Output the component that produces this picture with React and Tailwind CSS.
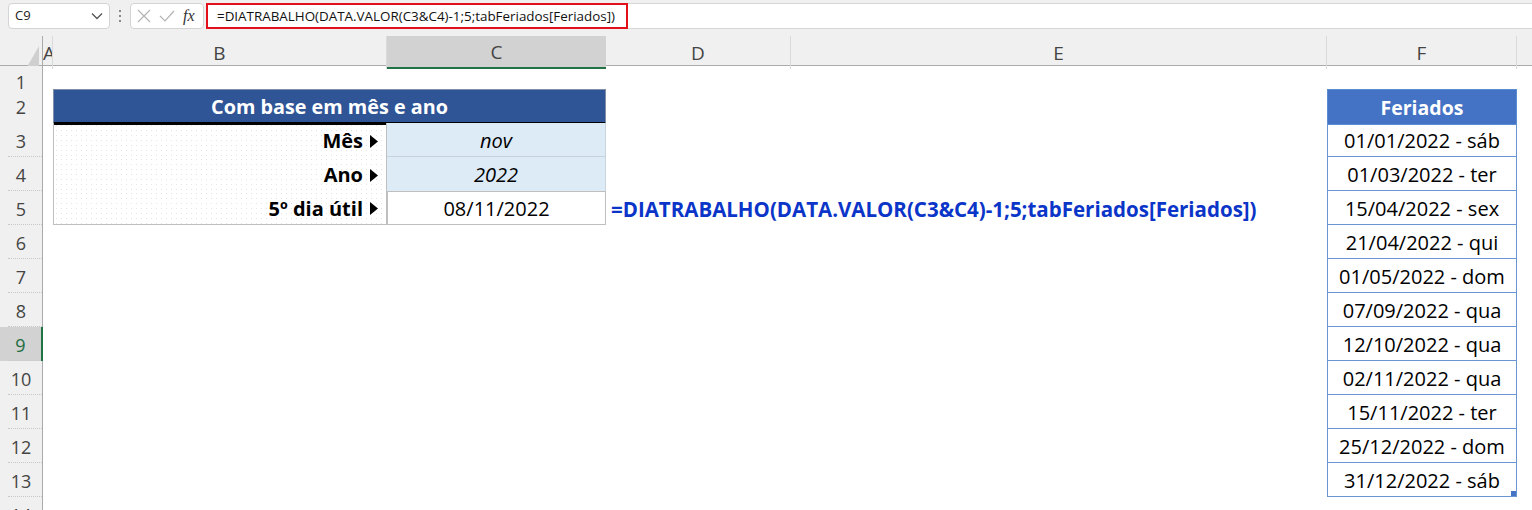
import React from 'react';

const font = { fontFamily: '"Open Sans", "Noto Sans", sans-serif' };

const Tri = () => (
  <svg width="8" height="13" viewBox="0 0 8 13" className="ml-[7px] shrink-0">
    <polygon points="0,0 8,6.5 0,13" fill="#000" />
  </svg>
);

const feriados = [
  '01/01/2022 - sáb',
  '01/03/2022 - ter',
  '15/04/2022 - sex',
  '21/04/2022 - qui',
  '01/05/2022 - dom',
  '07/09/2022 - qua',
  '12/10/2022 - qua',
  '02/11/2022 - qua',
  '15/11/2022 - ter',
  '25/12/2022 - dom',
  '31/12/2022 - sáb',
];

const cols = 'grid grid-cols-[43px_10px_334px_219px_185px_536px_190px_1fr]';

const FormulaBar = () => (
  <div className="h-[36px] bg-[#f0f0f0] flex items-start pt-[3px]">
    <div className="ml-[8px] w-[102px] h-[26px] bg-white border border-[#d4d4d4] rounded-[4px] flex items-center justify-between px-[6px] text-[13px] text-[#222]">
      <span>C9</span>
      <svg width="12" height="8" viewBox="0 0 12 8"><path d="M1 1.5 L6 6.5 L11 1.5" fill="none" stroke="#555" strokeWidth="1.3" /></svg>
    </div>
    <div className="w-[20px] h-[26px] flex flex-col items-center justify-center gap-[3px]">
      <span className="w-[2px] h-[2px] bg-[#888]" />
      <span className="w-[2px] h-[2px] bg-[#888]" />
      <span className="w-[2px] h-[2px] bg-[#888]" />
    </div>
    <div className="w-[74px] h-[26px] bg-white border border-[#d4d4d4] rounded-[4px] flex items-center px-[6px] gap-[8px]">
      <svg width="14" height="14" viewBox="0 0 14 14"><path d="M1 1 L13 13 M13 1 L1 13" stroke="#b4b4b4" strokeWidth="1.2" /></svg>
      <svg width="16" height="14" viewBox="0 0 16 14"><path d="M1 7 L6 12 L15 2" fill="none" stroke="#b4b4b4" strokeWidth="1.2" /></svg>
      <span className="text-[16px] italic text-[#333] leading-none" style={{ fontFamily: '"Liberation Serif", serif' }}>fx</span>
    </div>
    <div className="flex-1 h-[26px] ml-[2px] bg-white border-y border-[#d6d6d6] flex items-center">
      <div className="h-[26px] w-[422px] border-2 border-[#e3101c] flex items-center pl-[9px] text-[13.4px] text-[#111] whitespace-nowrap">
        =DIATRABALHO(DATA.VALOR(C3&amp;C4)-1;5;tabFeriados[Feriados])
      </div>
    </div>
  </div>
);

const ColHeaders = () => {
  const h = 'flex items-center justify-center text-[19px] text-[#444] pt-[2px]';
  const sep = 'border-r border-[#dadada]';
  return (
    <div className={`${cols} h-[30px] bg-[#f0f0f0] border-b border-[#ababab]`}>
      <div className="border-r border-[#ababab] flex items-end justify-end pr-[3px] pb-[2px]">
        <svg width="12" height="21" viewBox="0 0 12 21"><polygon points="12,0 12,21 0,21" fill="#cfcfcf" /></svg>
      </div>
      <div className={`overflow-hidden flex items-center pt-[2px] text-[19px] text-[#444] ${sep}`}>A</div>
      <div className={`${h} ${sep}`}>B</div>
      <div className={`${h} bg-[#d2d2d2] text-[#1e6b41] border-b-2 border-[#217346]`}>C</div>
      <div className={`${h} ${sep}`}>D</div>
      <div className={`${h} ${sep}`}>E</div>
      <div className={`${h} ${sep}`}>F</div>
      <div />
    </div>
  );
};

const RowHead = ({ n, active }) => (
  <div
    className={`flex flex-col ${
      active ? 'bg-[#d2d2d2] text-[#1e6b41] border-r-2 border-[#217346]' : 'bg-[#f0f0f0] text-[#444] border-r border-[#ababab]'
    }`}
  >
    <div className="flex-1 flex items-center justify-center pt-[3px] text-[18px]">{n}</div>
    <div className="ml-[8px] border-t border-dotted border-[#c8c8c8]" />
  </div>
);

const dots = 'bg-[radial-gradient(#e4e4e4_0.6px,transparent_0.8px)] bg-[length:5px_5px]';

const Label = ({ children, last }) => (
  <div className={`flex items-center justify-end pt-[2px] pr-[8px] font-bold text-[20px] text-black border-l border-r border-[#bfbfbf] ${dots} ${last ? 'border-b' : ''}`}>
    {children}
    <Tri />
  </div>
);

const FCell = ({ i }) => {
  if (i === 0)
    return (
      <div className="bg-[#4472c4] border border-[#5b8bd0] flex items-center justify-center pt-[2px] text-white font-bold text-[19.5px]">
        Feriados
      </div>
    );
  const last = i === feriados.length;
  return (
    <div className="relative border-x border-b border-[#6b95d2] flex items-center justify-center pt-[2px] text-[20px] text-black">
      {feriados[i - 1]}
      {last && <span className="absolute right-0 bottom-0 w-[5px] h-[5px] bg-[#4472c4]" />}
    </div>
  );
};

const Row = ({ n }) => {
  let b = <div />;
  let c = <div />;
  let d = <div />;
  if (n === 3) {
    b = <Label>Mês</Label>;
    c = <div className="bg-[#ddebf7] border-r border-b border-[#c9d3de] flex items-center justify-center pt-[2px] italic text-[20px] text-black">nov</div>;
  }
  if (n === 4) {
    b = <Label>Ano</Label>;
    c = <div className="bg-[#ddebf7] border-r border-[#c9d3de] flex items-center justify-center pt-[2px] italic text-[20px] text-black">2022</div>;
  }
  if (n === 5) {
    b = <Label last>5º dia útil</Label>;
    c = <div className="border border-[#bfbfbf] flex items-center justify-center pt-[2px] text-[20px] text-black">08/11/2022</div>;
    d = (
      <div className="flex items-center pl-[5px] pt-[2px] whitespace-nowrap overflow-visible text-[20.5px] font-bold text-[#0a35c8] z-10">
        =DIATRABALHO(DATA.VALOR(C3&amp;C4)-1;5;tabFeriados[Feriados])
      </div>
    );
  }
  const f = n >= 2 && n <= 13 ? <FCell i={n - 2} /> : <div />;
  return (
    <div className={`${cols} ${n === 1 ? 'h-[23px]' : 'h-[34px]'}`}>
      <RowHead n={n} active={n === 9} />
      <div />
      {n === 2 ? (
        <div className="col-span-2 bg-[#2f5597] border-t border-x border-[#7f8fa8] border-b-[3px] border-b-black flex items-center justify-center pt-[2px] text-white font-bold text-[19.8px]">
          Com base em mês e ano
        </div>
      ) : (
        <>
          {b}
          {c}
        </>
      )}
      {d}
      <div />
      {f}
      <div />
    </div>
  );
};

export default function App() {
  const rows = Array.from({ length: 14 }, (_, i) => i + 1);
  return (
    <div className="w-[1532px] h-[510px] overflow-hidden bg-white" style={font}>
      <FormulaBar />
      <ColHeaders />
      {rows.map((n) => (
        <Row key={n} n={n} />
      ))}
    </div>
  );
}
